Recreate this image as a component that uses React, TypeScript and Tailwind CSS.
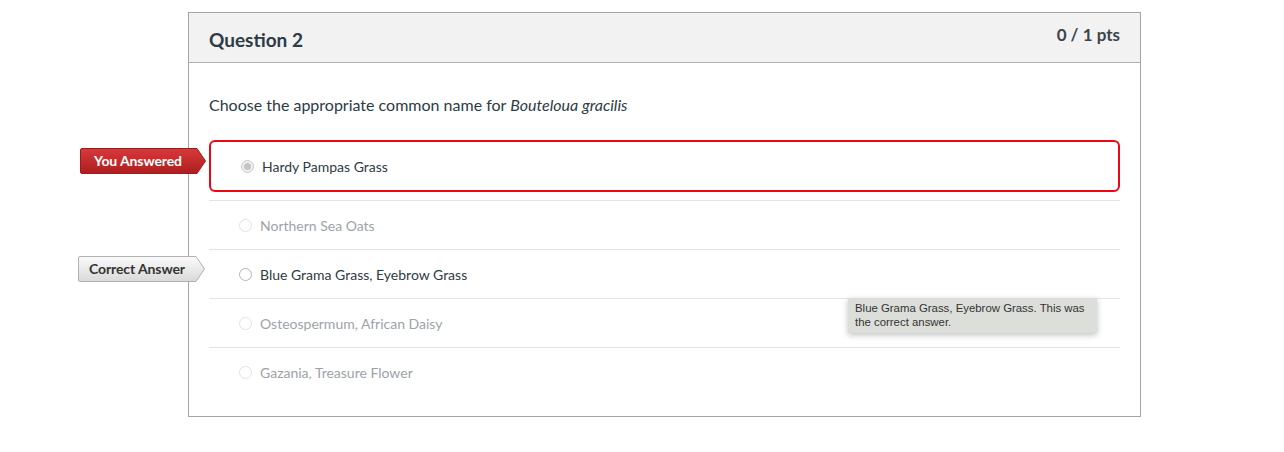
import React from "react";

type Ans = { text: string; state: "you" | "correct" | "other" };

const answers: Ans[] = [
  { text: "Northern Sea Oats", state: "other" },
  { text: "Blue Grama Grass, Eyebrow Grass", state: "correct" },
  { text: "Osteospermum, African Daisy", state: "other" },
  { text: "Gazania, Treasure Flower", state: "other" },
];

function Radio({ kind }: { kind: "checked" | "normal" | "faint" }) {
  if (kind === "checked")
    return (
      <span className="w-[13px] h-[13px] rounded-full border border-[#c8c8c8] bg-[#f0f0f0] flex items-center justify-center shrink-0">
        <span className="w-[7px] h-[7px] rounded-full bg-[#c4c4c4]" />
      </span>
    );
  if (kind === "normal")
    return <span className="w-[13px] h-[13px] rounded-full border border-[#b5b5b5] bg-white shrink-0" />;
  return <span className="w-[13px] h-[13px] rounded-full border border-[#e2e2e2] bg-white shrink-0" />;
}

function YouAnswered() {
  return (
    <div className="absolute left-[-129px] top-[8px] w-[126px] h-[26px]">
      <svg width="126" height="26" className="absolute inset-0">
        <defs>
          <linearGradient id="rg" x1="0" y1="0" x2="0" y2="1">
            <stop offset="0" stopColor="#d8393b" />
            <stop offset="1" stopColor="#ac1e1f" />
          </linearGradient>
        </defs>
        <path d="M2 0.5 H117 L125.5 13 L117 25.5 H2 Q0.5 25.5 0.5 24 V2 Q0.5 0.5 2 0.5 Z" fill="url(#rg)" stroke="#9e1b1c" strokeWidth="1" />
      </svg>
      <span className="absolute left-[14px] top-0 h-[26px] leading-[26px] text-white font-bold text-[14px] tracking-[-0.1px]">
        You Answered
      </span>
    </div>
  );
}

function CorrectAnswer() {
  return (
    <div className="absolute left-[-131px] top-[6px] w-[128px] h-[26px]">
      <svg width="128" height="26" className="absolute inset-0">
        <defs>
          <linearGradient id="gg" x1="0" y1="0" x2="0" y2="1">
            <stop offset="0" stopColor="#fbfbfb" />
            <stop offset="1" stopColor="#d9d9d9" />
          </linearGradient>
        </defs>
        <path d="M2 0.5 H118 L126.5 13 L118 25.5 H2 Q0.5 25.5 0.5 24 V2 Q0.5 0.5 2 0.5 Z" fill="url(#gg)" stroke="#b0b0b0" strokeWidth="1" />
      </svg>
      <span className="absolute left-[11px] top-0 h-[26px] leading-[26px] text-[#333] font-bold text-[14px] tracking-[-0.1px]">
        Correct Answer
      </span>
    </div>
  );
}

export default function App() {
  return (
    <div className="w-[1284px] h-[452px] bg-white overflow-hidden" style={{ fontFamily: "Lato, 'Open Sans', sans-serif" }}>
      <div className="ml-[188px] mt-[12px] w-[953px] border border-[#a5a5a5] bg-white text-[#2d3b45]">
        <div className="h-[50px] bg-[#f2f2f2] border-b border-[#b0b0b0] flex justify-between items-start px-[20px]">
          <div className="text-[19px] font-bold leading-[22px] mt-[16px]">Question 2</div>
          <div className="text-[17px] font-bold leading-[20px] mt-[12px] text-[#3d454c]">0 / 1 pts</div>
        </div>
        <div className="px-[20px] pt-[32px] pb-[20px]">
          <div className="text-[16px] leading-[20px] h-[20px]">
            Choose the appropriate common name for <em>Bouteloua gracilis</em>
          </div>
          <div className="mt-[25px] h-[60px] relative">
            <YouAnswered />
            <div className="h-[52px] border-2 border-[#ee0612] rounded-[6px] flex items-center gap-[8px] pl-[30px]">
              <Radio kind="checked" />
              <span className="text-[14px] text-[#2d3b45]">Hardy Pampas Grass</span>
            </div>
          </div>
          {answers.map((a) => (
            <div key={a.text} className="relative h-[49px] border-t border-[#e4e4e4] flex items-center gap-[8px] pl-[30px]">
              {a.state === "correct" && <CorrectAnswer />}
              <Radio kind={a.state === "correct" ? "normal" : "faint"} />
              <span className={"text-[14px] " + (a.state === "correct" ? "text-[#2d3b45]" : "text-[#9da3a8]")}>
                {a.text}
              </span>
              {a.state === "correct" && (
                <div
                  className="absolute left-[639px] top-[48px] w-[249px] px-[7px] pt-[3px] pb-[4px] bg-[#dcdeda] text-[#333] text-[11.4px] leading-[14px] shadow-[0_2px_6px_rgba(0,0,0,0.25)] z-10"
                  style={{ fontFamily: "'Liberation Sans', Arial, sans-serif" }}
                >
                  Blue Grama Grass, Eyebrow Grass. This was the correct answer.
                </div>
              )}
            </div>
          ))}
        </div>
      </div>
    </div>
  );
}
